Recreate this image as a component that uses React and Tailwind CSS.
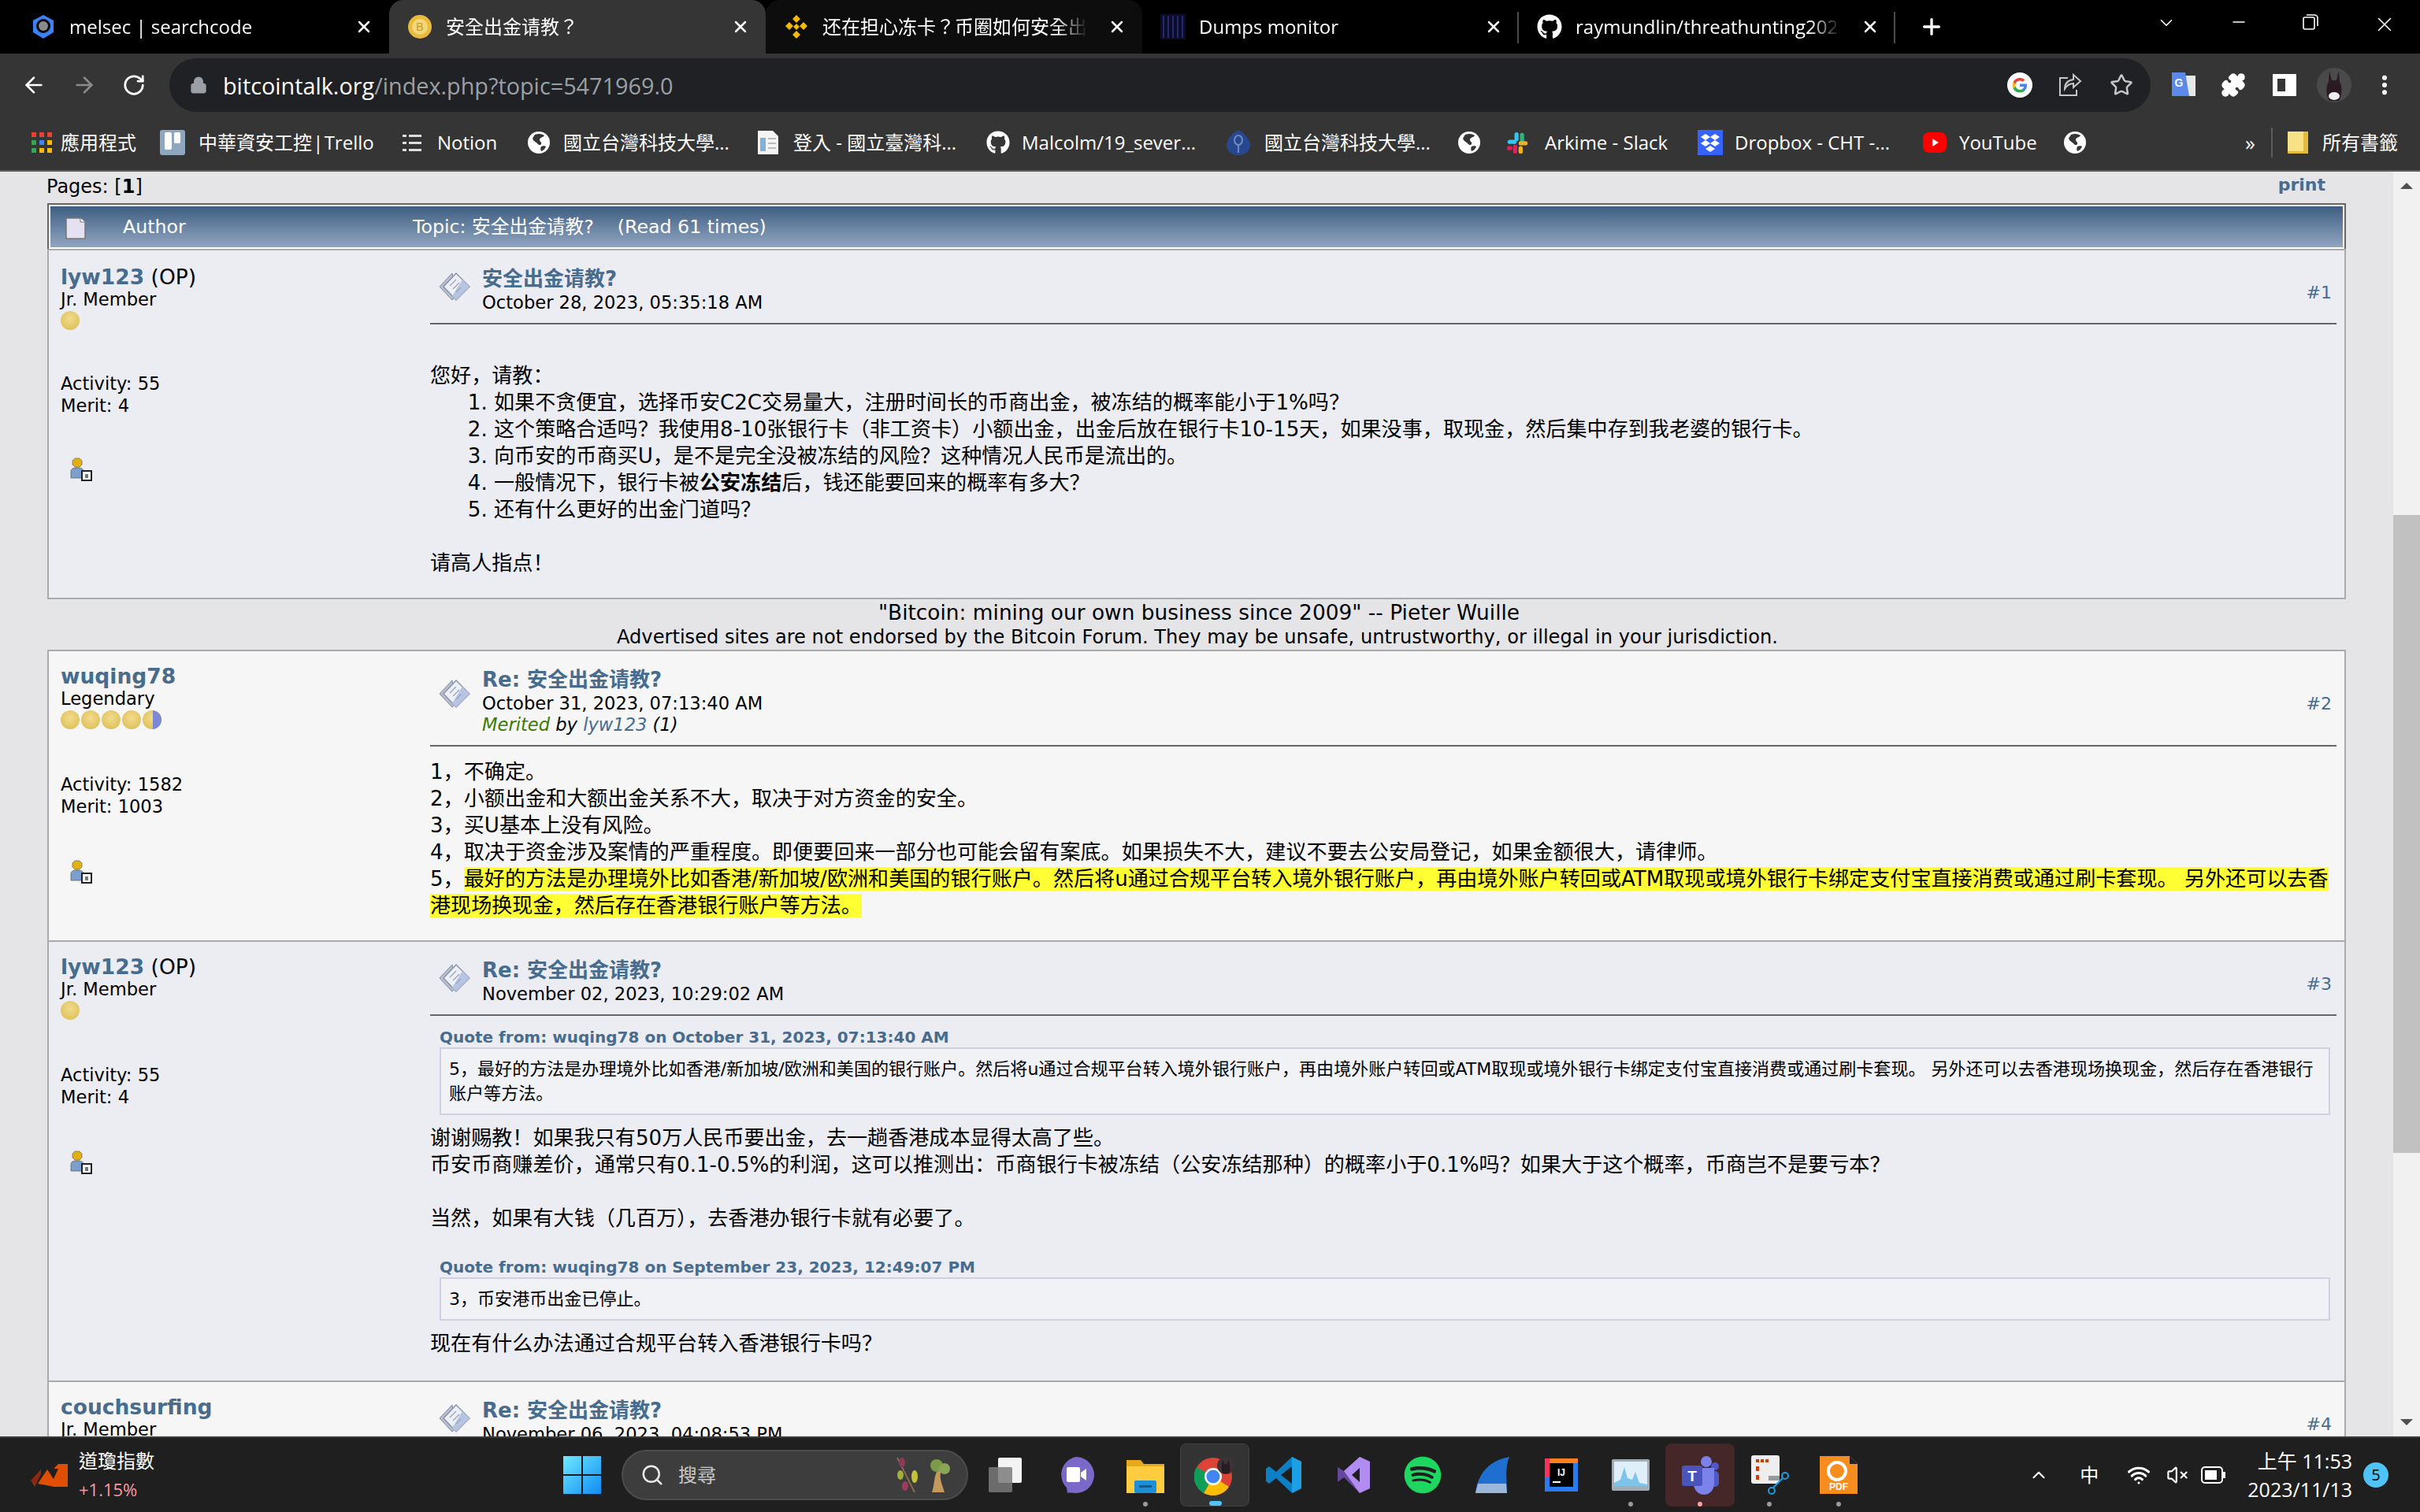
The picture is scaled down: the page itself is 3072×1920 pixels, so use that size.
import {
  ArrowLeft,
  ArrowRight,
  RotateCw,
  Lock,
  Star,
  Puzzle,
  EllipsisVertical,
  ChevronDown,
  ChevronUp,
  Minus,
  X,
  Plus,
  Wifi,
  VolumeX,
  Search,
} from "lucide-react";
import { FaGithub, FaSpotify } from "react-icons/fa";

const uiFont = "[font-family:'Open_Sans','Noto_Sans_CJK_TC',sans-serif]";
const forumFont = "[font-family:'DejaVu_Sans','Noto_Sans_CJK_SC',sans-serif]";

const GlobeIcon = () => (
  <svg viewBox="0 0 28 28" className="w-7 h-7">
    <circle cx="14" cy="14" r="14" fill="#fff" />
    <path d="M9 4c5-2 9-1 12 1-2 3-5 2-6 5-1 2 3 3 2 6-1 2-4 1-5-1-2-2-5-3-6-6 1-2 2-4 3-5zM17 19c2-1 5-1 6 0-1 3-3 5-6 6-1-2-1-4 0-6z" fill="#353535" />
  </svg>
);

const AppsIcon = () => (
  <svg viewBox="0 0 27 27" className="w-[27px] h-[27px]">
    {["#ea4335", "#ea4335", "#ea4335", "#34a853", "#4285f4", "#fbbc04", "#34a853", "#fbbc04", "#fbbc04"].map((c, i) => (
      <rect key={i} x={(i % 3) * 10} y={Math.floor(i / 3) * 10} width="6" height="6" fill={c} />
    ))}
  </svg>
);

const TrelloIcon = () => (
  <svg viewBox="0 0 32 32" className="w-8 h-8">
    <rect width="32" height="32" rx="3" fill="#8fa6bf" />
    <rect x="6" y="3" width="9" height="22" rx="2" fill="#fff" />
    <rect x="18" y="3" width="8" height="14" rx="2" fill="#fff" />
  </svg>
);

const NotionIcon = () => (
  <svg viewBox="0 0 26 26" className="w-[26px] h-[26px]">
    {[3, 12, 21].map((y) => (
      <g key={y}>
        <rect x="1" y={y} width="5" height="3" fill="#ddd" />
        <rect x="9" y={y} width="16" height="3" fill="#ddd" />
      </g>
    ))}
  </svg>
);

const DocIcon = () => (
  <svg viewBox="0 0 30 32" className="w-[30px] h-8">
    <path d="M2 1h19l7 7v23H2z" fill="#f4f4f4" />
    <rect x="5" y="10" width="7" height="17" fill="#7fb2dc" />
    <rect x="15" y="10" width="10" height="2" fill="#bbb" />
    <rect x="15" y="16" width="10" height="2" fill="#bbb" />
    <rect x="15" y="22" width="10" height="2" fill="#bbb" />
  </svg>
);

const NtustIcon = () => (
  <svg viewBox="0 0 32 32" className="w-8 h-8">
    <path d="M16 0c9 5 15 12 15 20 0 7-7 12-15 12S1 27 1 20C1 12 7 5 16 0z" fill="#27478f" />
    <ellipse cx="16" cy="13" rx="5" ry="6" fill="none" stroke="#7288bd" strokeWidth="2" />
    <path d="M16 19v10" stroke="#7288bd" strokeWidth="2" />
  </svg>
);

const SlackIcon = () => (
  <svg viewBox="0 0 32 32" className="w-7 h-8">
    <rect x="12" y="1" width="6" height="13" rx="3" fill="#36c5f0" />
    <rect x="2" y="12" width="13" height="6" rx="3" fill="#36c5f0" />
    <rect x="20" y="2" width="6" height="13" rx="3" fill="#2eb67d" />
    <rect x="18" y="14" width="13" height="6" rx="3" fill="#ecb22e" />
    <rect x="18" y="21" width="6" height="11" rx="3" fill="#ecb22e" />
    <rect x="10" y="19" width="6" height="13" rx="3" fill="#e01e5a" />
    <rect x="1" y="21" width="8" height="6" rx="3" fill="#e01e5a" />
  </svg>
);

const DropboxIcon = () => (
  <svg viewBox="0 0 32 32" className="w-8 h-8">
    <rect width="32" height="32" fill="#3563ff" />
    <path d="M10 5l6 4-6 4-6-4zM22 5l6 4-6 4-6-4zM10 13l6 4-6 4-6-4zM22 13l6 4-6 4-6-4zM16 20l6 4-6 4-6-4z" fill="#fff" />
  </svg>
);

const YoutubeIcon = () => (
  <svg viewBox="0 0 32 32" className="w-8 h-8">
    <rect x="1" y="3" width="30" height="26" rx="8" fill="#f00" />
    <path d="M13 11l8 5-8 5z" fill="#fff" />
  </svg>
);

const FolderBookmark = () => (
  <svg viewBox="0 0 28 30" className="w-7 h-[30px]">
    <rect x="1" y="1" width="24" height="28" fill="#f8e287" />
    <rect x="21" y="1" width="6" height="28" fill="#e3bd3a" />
    <rect x="1" y="26" width="24" height="3" fill="#e3bd3a" />
  </svg>
);

const bookmarks = [
  { icon: <AppsIcon />, label: "應用程式", cls: "w-[163px] gap-[10px]" },
  { icon: <TrelloIcon />, label: "中華資安工控 | Trello", cls: "w-[307px] gap-[17px] [word-spacing:-5px]" },
  { icon: <NotionIcon />, label: "Notion", cls: "w-[160px] gap-[19px]" },
  { icon: <GlobeIcon />, label: "國立台灣科技大學...", cls: "w-[290px] gap-[17px]" },
  { icon: <DocIcon />, label: "登入 - 國立臺灣科...", cls: "w-[292px] gap-[17px]" },
  { icon: <FaGithub className="w-[30px] h-[30px] text-white" />, label: "Malcolm/19_sever...", cls: "w-[304px] gap-[15px]" },
  { icon: <NtustIcon />, label: "國立台灣科技大學...", cls: "w-[295px] gap-[17px]" },
  { icon: <GlobeIcon />, label: "", cls: "w-[61px]" },
  { icon: <SlackIcon />, label: "Arkime - Slack", cls: "w-[243px] gap-[21px]" },
  { icon: <DropboxIcon />, label: "Dropbox - CHT -...", cls: "w-[285px] gap-[15px]" },
  { icon: <YoutubeIcon />, label: "YouTube", cls: "w-[180px] gap-[15px]" },
  { icon: <GlobeIcon />, label: "", cls: "w-[60px]" },
];

const SearchcodeIcon = () => (
  <svg viewBox="0 0 32 32" className="w-8 h-8">
    <path d="M16 1l13 7v15l-13 8-13-8V8z" fill="#3b82f6" />
    <circle cx="16" cy="15" r="9" fill="#0a0a0a" />
    <circle cx="16" cy="15" r="6" fill="#8a8a8a" />
  </svg>
);

const CoinIcon = () => (
  <svg viewBox="0 0 32 32" className="w-8 h-8">
    <circle cx="16" cy="16" r="15" fill="#e9bb3c" />
    <circle cx="16" cy="16" r="10" fill="#f2d677" />
    <text x="16" y="21" textAnchor="middle" fontSize="14" fill="#c79a24" fontFamily="Liberation Sans">B</text>
  </svg>
);

const BinanceIcon = () => (
  <svg viewBox="0 0 32 32" className="w-8 h-8">
    <path d="M16 1l5 5-5 5-5-5zM7 10l5 5-5 5-5-5zM25 10l5 5-5 5-5-5zM16 12l4 4-4 4-4-4zM16 21l5 5-5 5-5-5z" fill="#f0b90b" />
  </svg>
);

const DumpsIcon = () => (
  <svg viewBox="0 0 32 32" className="w-8 h-8">
    <rect width="32" height="32" fill="#0b0b2a" />
    {[3, 9, 15, 21, 27].map((x) => (
      <rect key={x} x={x} y="2" width="2" height="28" fill="#262a6a" />
    ))}
  </svg>
);

const tabs = [
  { icon: <SearchcodeIcon />, title: "melsec | searchcode" },
  { icon: <CoinIcon />, title: "安全出金请教？", active: true },
  { icon: <BinanceIcon />, title: "还在担心冻卡？币圈如何安全出金", dim: true },
  { icon: <DumpsIcon />, title: "Dumps monitor", sep: true },
  { icon: <FaGithub className="w-8 h-8 text-white" />, title: "raymundlin/threathunting2023", sep: true },
];

const GoogleG = () => (
  <svg viewBox="0 0 32 32" className="w-8 h-8">
    <circle cx="16" cy="16" r="16" fill="#fff" />
    <path d="M25 16.3c0-.7 0-1.3-.2-1.9H16v3.6h5.100a4.400 4.400 0 0 1-1.900 2.900v2.400h3c1.800-1.700 2.800-4 2.800-7z" fill="#4285f4" />
    <path d="M16 25.500c2.500 0 4.700-.8 6.200-2.200l-3-2.400c-.8.600-1.900 1-3.200 1-2.500 0-4.600-1.700-5.300-3.900H7.600v2.400a9.400 9.400 0 0 0 8.400 5.100z" fill="#34a853" />
    <path d="M10.700 18a5.600 5.600 0 0 1 0-3.600V12H7.600a9.400 9.400 0 0 0 0 8.400z" fill="#fbbc04" />
    <path d="M16 10.500c1.400 0 2.600.5 3.600 1.400l2.700-2.700A9.400 9.400 0 0 0 7.600 12l3.100 2.400c.7-2.200 2.800-3.900 5.300-3.900z" fill="#ea4335" />
  </svg>
);

const ShareIcon = () => (
  <svg viewBox="0 0 32 32" className="w-8 h-8" fill="none" stroke="#c4c7c5" strokeWidth="2">
    <path d="M13 7H3v22h21v-7" />
    <path d="M20 3l9 8-9 8v-5c-5 0-8 2-11 7 0-7 4-11 11-12z" />
  </svg>
);

const TranslateIcon = () => (
  <svg viewBox="0 0 34 34" className="w-[34px] h-[34px]">
    <path d="M15 5h17v26H15z" fill="#e8e8e8" />
    <path d="M2 1h17l5 30H2z" fill="#5a8bea" />
    <text x="11" y="19" textAnchor="middle" fontSize="14" fontWeight="700" fill="#fff" fontFamily="Liberation Sans">G</text>
  </svg>
);

const AvatarIcon = () => (
  <svg viewBox="0 0 44 44" className="w-11 h-11">
    <circle cx="22" cy="22" r="22" fill="#4a4a4a" />
    <path d="M16 4l3 12h6l3-12 1 14c4 5 3 18-1 24H16c-4-6-5-19-1-24z" fill="#2a1a22" />
    <ellipse cx="22" cy="36" rx="7" ry="5" fill="#eee" />
  </svg>
);

const TabBar = () => (
  <div className={`h-[68px] bg-black flex items-stretch pl-4 text-white text-[24px] ${uiFont}`}>
    {tabs.map((t) => (
      <div
        key={t.title}
        className={`w-[478px] shrink-0 flex items-center pl-[23px] pr-[20px] gap-[17px] relative rounded-t-[18px] ${
          t.active ? "bg-[#353535]" : t.dim ? "bg-[#0d0d0d]" : ""
        }`}
      >
        <span className="w-8 h-8 shrink-0 flex items-center justify-center">{t.icon}</span>
        <span className="flex-1 min-w-0 whitespace-nowrap overflow-hidden [mask-image:linear-gradient(to_right,black_88%,transparent)]">
          {t.title}
        </span>
        <X size={24} strokeWidth={2.5} className="shrink-0 ml-2" />
        {t.sep && <span className="absolute right-0 top-[15px] h-[40px] w-[2px] bg-[#4a4a4a]" />}
      </div>
    ))}
    <div className="w-[92px] flex items-center justify-center">
      <Plus size={32} strokeWidth={2.5} />
    </div>
    <div className="flex-1 flex items-start justify-end pt-[16px] pr-[30px] gap-[67px]">
      <ChevronDown size={26} strokeWidth={1.5} />
      <Minus size={24} strokeWidth={1.5} />
      <svg viewBox="0 0 24 24" className="w-6 h-6" fill="none" stroke="#fff" strokeWidth="1.6">
        <rect x="3" y="6" width="14" height="15" rx="2" />
        <path d="M7 3h10a4 4 0 0 1 4 4v10" />
      </svg>
      <X size={30} strokeWidth={1.3} />
    </div>
  </div>
);

const Toolbar = () => (
  <div className="h-[80px] bg-[#353535] flex items-center pl-[27px] text-white">
    <ArrowLeft size={32} strokeWidth={2} />
    <ArrowRight size={32} strokeWidth={2} className="ml-[32px] text-[#8b8b8b]" />
    <RotateCw size={30} strokeWidth={2.2} className="ml-[32px]" />
    <div className={`ml-[30px] w-[2515px] h-[68px] rounded-[34px] bg-[#202124] flex items-center pl-[26px] pr-[22px] text-[28.8px] ${uiFont}`}>
      <Lock size={22} strokeWidth={3} className="text-[#9aa0a6] fill-[#9aa0a6]" />
      <span className="ml-[20px] flex-1 mt-[2px]">
        bitcointalk.org<span className="text-[#9aa0a6]">/index.php?topic=5471969.0</span>
      </span>
      <GoogleG />
      <span className="ml-[32px]">
        <ShareIcon />
      </span>
      <Star size={30} strokeWidth={2} className="ml-[34px] text-[#c4c7c5]" />
    </div>
    <span className="ml-[25px]">
      <TranslateIcon />
    </span>
    <Puzzle size={32} strokeWidth={2} className="ml-[30px] fill-white" />
    <span className="ml-[34px] w-[30px] h-[28px] border-white border-[6px] border-r-[14px]" />
    <span className="ml-[26px]">
      <AvatarIcon />
    </span>
    <EllipsisVertical size={32} strokeWidth={2.5} className="ml-[26px]" />
  </div>
);

const BookmarkBar = () => (
  <div className={`h-[70px] pb-[2px] bg-[#353535] border-b-2 border-[#5f5f5f] flex items-center pl-[40px] text-[24px] text-white whitespace-nowrap ${uiFont}`}>
    {bookmarks.map((b, i) => (
      <div key={i} className={`${b.cls} shrink-0 flex items-center`}>
        {b.icon}
        {b.label && <span>{b.label}</span>}
      </div>
    ))}
    <span className="ml-[170px] text-[26px] leading-none">»</span>
    <span className="ml-[20px] w-[2px] h-[38px] bg-[#5c5c5c]" />
    <span className="ml-[18px] flex items-center gap-[17px]">
      <FolderBookmark />
      所有書籤
    </span>
  </div>
);

const PostIcon = () => (
  <svg viewBox="0 0 40 40" className="w-[40px] h-[40px] shrink-0">
    <path d="M17 3l-16 17 16 17 5-5z" fill="#b8bfcf" stroke="#7f8799" strokeWidth="1" />
    <path d="M22 3L6 20l16 17 17-17z" fill="#eef0f7" stroke="#8c93a8" strokeWidth="1.5" />
    <path d="M30 11l9 9-17 17-5-5z" fill="#b7c3e2" />
    <path d="M14 19l8-8M18 23l8-8M22 27l6-6" stroke="#9fa6b8" strokeWidth="1.4" />
  </svg>
);

const UserIcon = () => (
  <svg viewBox="0 0 28 30" className="w-7 h-[30px]">
    <path d="M6 1h6l3 3v5l-3 3H6L3 9V4z" fill="#e3b012" stroke="#666" strokeWidth="0.7" />
    <path d="M1 26v-8c0-4 3-5 8-5s8 1 8 5v8z" fill="#7d9fcb" stroke="#555" strokeWidth="0.7" />
    <rect x="15" y="17" width="12" height="12" fill="#fff" stroke="#222" strokeWidth="2" />
    <rect x="19" y="21" width="4" height="5" fill="#777" />
  </svg>
);

const Coin = ({ half }) => (
  <span className="w-[24px] h-[24px] rounded-full bg-[radial-gradient(circle_at_50%_40%,#f2dc8c,#d9b94f)] overflow-hidden flex justify-end">
    {half && <span className="w-[11px] h-full bg-[#7c87d6]" />}
  </span>
);

const Author = ({ name, op, rank, stars, half, activity, merit, first }) => (
  <div className={`w-[484px] shrink-0 pl-[15px] ${first ? "pt-[18px]" : "pt-[16px]"} text-[22.6px] leading-[27px] text-black`}>
    <div className="text-[26.5px] leading-[31px]">
      <span className="font-bold text-[#476c8e]">{name}</span>
      {op && <span> (OP)</span>}
    </div>
    {rank && <div>{rank}</div>}
    <div className="flex gap-[2px] h-[26px] items-center">
      {Array.from({ length: stars }).map((_, i) => (
        <Coin key={i} />
      ))}
      {half && <Coin half />}
    </div>
    <div className={first ? "mt-[54px]" : "mt-[56px]"}>Activity: {activity}</div>
    <div className="mt-[1px]">Merit: {merit}</div>
    <div className={`${first ? "mt-[52px]" : "mt-[54px]"} pl-[12px]`}>
      <UserIcon />
    </div>
  </div>
);

const PostHead = ({ subject, date, num, merited }) => (
  <div className="border-b-2 border-[#666] flex items-start">
    <div className={`pl-[11px] ${merited ? "pt-[14px]" : "pt-[6px]"}`}>
      <PostIcon />
    </div>
    <div className="ml-[15px] flex-1">
      <div className="text-[26px] leading-[33px] font-bold text-[#476c8e]">{subject}</div>
      <div className="text-[22.6px] leading-[27px] text-black">{date}</div>
      {merited && (
        <div className="text-[22.6px] leading-[27px] italic text-black">
          <span className="text-[#3d7a00]">Merited</span> by <span className="text-[#476c8e]">lyw123</span> (1)
        </div>
      )}
      <div className="h-[12px]" />
    </div>
    <div className={`text-[22px] text-[#476c8e] ${merited ? "mt-[30px]" : "mt-[17px]"} pr-[6px]`}>#{num}</div>
  </div>
);

const Quote = ({ head, children }) => (
  <div className="pl-[12px] pr-[4px]">
    <div className="text-[20px] leading-[26px] font-bold text-[#476c8e]">{head}</div>
    <div className="border-2 border-[#d0d0e0] bg-[#f1f2f6] px-[10px] py-[10px] text-[22.05px] leading-[31px] text-black">{children}</div>
  </div>
);

const Post = ({ bg, author, children }) => (
  <div className={`flex border-x-2 border-b-2 border-[#aaa] ${bg}`}>
    <Author {...author} />
    <div className="flex-1 min-w-0 pr-[10px] pt-[20px] text-[26.1px] leading-[34px] text-black">{children}</div>
  </div>
);

const yellow = "bg-[#ffff33]";

const Forum = () => (
  <div className={`flex-1 min-w-0 bg-[#e5e5e8] pl-[60px] pr-[60px] overflow-hidden ${forumFont}`}>
    <div className="flex justify-between h-[40px] items-center text-[24px] text-black">
      <span className="-ml-[1px] -mt-[2px]">
        Pages: [<b>1</b>]
      </span>
      <a className="text-[22px] font-bold text-[#476c8e] -mt-[7px] mr-[26px]">print</a>
    </div>

    <div className="border-2 border-[#666] border-b-0 p-[2px] bg-white">
      <div className="h-[52px] pt-[2px] bg-gradient-to-b from-[#3f5f82] to-[#92a6c1] flex items-center text-white text-[23.7px]">
        <svg viewBox="0 0 26 30" className="w-[26px] h-[30px] ml-[19px]">
          <path d="M1 3h18l6 5v21H1z" fill="#e4e2f2" stroke="#777" strokeWidth="1.500" />
          <path d="M19 3v5h6" fill="#fff" stroke="#777" strokeWidth="1" />
        </svg>
        <span className="ml-[47px] w-[368px]">Author</span>
        <span>Topic: 安全出金请教?</span>
        <span className="ml-[30px]">(Read 61 times)</span>
      </div>
    </div>

    <Post
      bg="bg-[#ecedf3] border-t-2"
      author={{ name: "lyw123", op: true, rank: "Jr. Member", stars: 1, activity: 55, merit: 4, first: true }}
    >
      <PostHead subject="安全出金请教?" date="October 28, 2023, 05:35:18 AM" num={1} />
      <div className="pt-[48px] pb-[27px] pr-[4px]">
        <div>您好，请教：</div>
        <ol className="pl-[81px] list-decimal">
          <li>如果不贪便宜，选择币安C2C交易量大，注册时间长的币商出金，被冻结的概率能小于1%吗？</li>
          <li>这个策略合适吗？我使用8-10张银行卡（非工资卡）小额出金，出金后放在银行卡10-15天，如果没事，取现金，然后集中存到我老婆的银行卡。</li>
          <li>向币安的币商买U，是不是完全没被冻结的风险？这种情况人民币是流出的。</li>
          <li>
            一般情况下，银行卡被<b>公安冻结</b>后，钱还能要回来的概率有多大？
          </li>
          <li>还有什么更好的出金门道吗？</li>
        </ol>
        <br />
        <div>请高人指点！</div>
      </div>
    </Post>

    <div className="text-center text-black">
      <div className="text-[26.4px] leading-[33px] pl-[6px]">"Bitcoin: mining our own business since 2009" -- Pieter Wuille</div>
      <div className="text-[24.15px] leading-[31px] pl-[2px]">Advertised sites are not endorsed by the Bitcoin Forum. They may be unsafe, untrustworthy, or illegal in your jurisdiction.</div>
    </div>

    <Post
      bg="bg-[#f6f6f6] border-t-2"
      author={{ name: "wuqing78", rank: "Legendary", stars: 4, half: true, activity: 1582, merit: 1003 }}
    >
      <PostHead subject="Re: 安全出金请教?" date="October 31, 2023, 07:13:40 AM" num={2} merited />
      <div className="pt-[15px] pb-[27px] pr-[4px]">
        <div>1，不确定。</div>
        <div>2，小额出金和大额出金关系不大，取决于对方资金的安全。</div>
        <div>3，买U基本上没有风险。</div>
        <div>4，取决于资金涉及案情的严重程度。即便要回来一部分也可能会留有案底。如果损失不大，建议不要去公安局登记，如果金额很大，请律师。</div>
        <div>
          5，<span className={yellow}>最好的方法是办理境外比如香港/新加坡/欧洲和美国的银行账户。然后将u通过合规平台转入境外银行账户，再由境外账户转回或ATM取现或境外银行卡绑定支付宝直接消费或通过刷卡套现。 另外还可以去香港现场换现金，然后存在香港银行账户等方法。</span>
        </div>
      </div>
    </Post>

    <Post bg="bg-[#ecedf3]" author={{ name: "lyw123", op: true, rank: "Jr. Member", stars: 1, activity: 55, merit: 4 }}>
      <PostHead subject="Re: 安全出金请教?" date="November 02, 2023, 10:29:02 AM" num={3} />
      <div className="pt-[14px] pb-[30px] pr-[4px]">
        <Quote head="Quote from: wuqing78 on October 31, 2023, 07:13:40 AM">
          5，最好的方法是办理境外比如香港/新加坡/欧洲和美国的银行账户。然后将u通过合规平台转入境外银行账户，再由境外账户转回或ATM取现或境外银行卡绑定支付宝直接消费或通过刷卡套现。 另外还可以去香港现场换现金，然后存在香港银行账户等方法。
        </Quote>
        <div className="mt-[12px]">谢谢赐教！如果我只有50万人民币要出金，去一趟香港成本显得太高了些。</div>
        <div>币安币商赚差价，通常只有0.1-0.5%的利润，这可以推测出：币商银行卡被冻结（公安冻结那种）的概率小于0.1%吗？如果大于这个概率，币商岂不是要亏本？</div>
        <br />
        <div>当然，如果有大钱（几百万），去香港办银行卡就有必要了。</div>
        <div className="h-[32px]" />
        <Quote head="Quote from: wuqing78 on September 23, 2023, 12:49:07 PM">3，币安港币出金已停止。</Quote>
        <div className="mt-[12px]">现在有什么办法通过合规平台转入香港银行卡吗？</div>
      </div>
    </Post>

    <Post bg="bg-[#f6f6f6]" author={{ name: "couchsurfing", rank: "Jr. Member", stars: 1, activity: 55, merit: 4 }}>
      <PostHead subject="Re: 安全出金请教?" date="November 06, 2023, 04:08:53 PM" num={4} />
    </Post>
  </div>
);

const Scrollbar = () => (
  <div className="w-[34px] shrink-0 bg-[#f1f1f1] flex flex-col items-center">
    <svg viewBox="0 0 16 8" className="w-4 h-2 mt-[14px] shrink-0">
      <path d="M8 0l8 8H0z" fill="#505050" />
    </svg>
    <div className="w-full h-[810px] bg-[#c1c1c1] mt-[414px] shrink-0" />
    <div className="flex-1" />
    <svg viewBox="0 0 16 8" className="w-4 h-2 mb-[14px] shrink-0">
      <path d="M8 8l8-8H0z" fill="#505050" />
    </svg>
  </div>
);

const Dock = ({ children, dot, active, teams }) => (
  <div
    className={`w-[88px] h-[80px] rounded-[8px] flex items-center justify-center relative shrink-0 ${
      active ? "bg-[#333] border border-[#444]" : teams ? "bg-[#452729]" : ""
    }`}
  >
    {children}
    {dot && <span className={`absolute bottom-[0px] rounded-full h-[6px] ${dot}`} />}
  </div>
);

const greyDot = "left-[41px] w-[6px] bg-[#9a9a9a]";

const Taskbar = () => (
  <div className={`h-[96px] bg-[#1f1f1f] border-t-2 border-[#3a3a3a] flex items-center text-white shrink-0 ${uiFont}`}>
    <div className="w-[715px] shrink-0 flex items-center pl-[38px]">
      <svg viewBox="0 0 48 30" className="w-[48px] h-[30px]">
        <path d="M14 8L1 22l5 8 8-16z" fill="#8b2a12" />
        <path d="M10 26l12-18 8 12 6-13h-6l6-6h12v30H36z" fill="#e04e00" />
      </svg>
      <div className="ml-[14px] leading-[36px]">
        <div className="text-[24px]">道瓊指數</div>
        <div className="text-[22px] text-[#f49aa5]">+1.15%</div>
      </div>
    </div>
    <svg viewBox="0 0 48 48" className="w-[48px] h-[48px] shrink-0">
      <defs>
        <linearGradient id="win" x1="0" y1="0" x2="1" y2="1">
          <stop offset="0" stopColor="#6fe9ff" />
          <stop offset="1" stopColor="#0f8cf5" />
        </linearGradient>
      </defs>
      <path d="M0 0h23v23H0zM25 0h23v23H25zM0 25h23v23H0zM25 25h23v23H25z" fill="url(#win)" />
    </svg>
    <div className="ml-[26px] w-[440px] h-[64px] rounded-[32px] bg-[#3d3d3d] border-2 border-[#4c4c4c] flex items-center pl-[22px] pr-[16px] text-[24px] text-[#c8c8c8] shrink-0">
      <Search size={30} strokeWidth={2} className="text-[#e8e8e8]" />
      <span className="ml-[18px] flex-1">搜尋</span>
      <svg viewBox="0 0 80 48" className="w-[80px] h-[48px]">
        <path d="M52 46c4-12 2-20 8-30l4 2c-4 10 2 20 4 28z" fill="#c39a5c" />
        <circle cx="58" cy="12" r="8" fill="#7c9a47" />
        <circle cx="68" cy="16" r="7" fill="#8aa655" />
        <path d="M8 2l22 44" stroke="#8a6a4a" strokeWidth="2" />
        <ellipse cx="14" cy="8" rx="4" ry="6" fill="#8d3a52" />
        <ellipse cx="12" cy="24" rx="4" ry="6" fill="#a2ad3a" />
        <ellipse cx="30" cy="26" rx="4" ry="8" fill="#c4c23a" />
        <ellipse cx="18" cy="38" rx="4" ry="6" fill="#a03a5a" />
      </svg>
    </div>

    <div className="ml-[5px] flex items-center">
      <Dock>
        <svg viewBox="0 0 50 44" className="w-[50px] h-[44px]">
          <rect x="14" y="0" width="30" height="32" rx="2" fill="#f3f3f3" />
          <rect x="2" y="12" width="30" height="32" rx="2" fill="#7a7a7a" opacity="0.85" />
        </svg>
      </Dock>
      <Dock>
        <svg viewBox="0 0 46 46" className="w-[46px] h-[46px]">
          <path d="M23 0a23 23 0 0 1 0 46c-4 0-8-1-11 0l-1-7a23 23 0 0 1 12-39z" fill="#7b68c8" />
          <rect x="11" y="13" width="17" height="19" rx="2" fill="#fff" />
          <path d="M29 20l7-5v15l-7-5z" fill="#fff" />
        </svg>
      </Dock>
      <Dock dot={greyDot}>
        <svg viewBox="0 0 48 46" className="w-[48px] h-[46px]">
          <path d="M0 4h18l4 5h26v37H0z" fill="#e8a91d" />
          <path d="M0 12h48v34H0z" fill="#ffcb3f" />
          <rect x="10" y="30" width="28" height="16" rx="2" fill="#1b8fd8" />
          <rect x="16" y="36" width="16" height="3" fill="#0f5a8f" />
        </svg>
      </Dock>
      <Dock active dot="left-[36px] w-[16px] bg-[#4fc3f7]">
        <svg viewBox="0 0 52 52" className="w-[52px] h-[52px]">
          <circle cx="24" cy="28" r="24" fill="#db4437" />
          <path d="M24 28L44 41A24 24 0 0 1 12 49z" fill="#fbbc04" />
          <path d="M24 28L12 49A24 24 0 0 1 3 16z" fill="#0f9d58" />
          <circle cx="24" cy="28" r="11" fill="#fff" />
          <circle cx="24" cy="28" r="8.500" fill="#4285f4" />
          <circle cx="40" cy="14" r="11" fill="#3b3336" />
          <path d="M36 6l2 6h4l2-6 1 8c1 4 0 7-1 10h-8c-1-3-2-6-1-10z" fill="#2a1a22" />
        </svg>
      </Dock>
      <Dock>
        <svg viewBox="0 0 48 48" className="w-[48px] h-[48px]">
          <path d="M34 1l12 6v34l-12 6-20-19-9 7-4-3v-16l4-3 9 7z" fill="#0d7fc4" />
          <path d="M34 13v22L20 24z" fill="#1f1f1f" />
          <path d="M34 1l12 6v34l-12 6z" fill="#1ba0e5" />
        </svg>
      </Dock>
      <Dock>
        <svg viewBox="0 0 48 48" className="w-[48px] h-[48px]">
          <path d="M32 1l13 6v34l-13 6-20-20-8 6V14l8 5z" fill="#67469e" />
          <path d="M32 1l13 6v34l-13 6L12 19z" fill="#b18df2" />
          <path d="M32 15v18l-10-9z" fill="#1f1f1f" />
        </svg>
      </Dock>
      <Dock>
        <FaSpotify className="w-[48px] h-[48px] text-[#1ed760]" />
      </Dock>
      <Dock>
        <svg viewBox="0 0 48 48" className="w-[48px] h-[48px]">
          <path d="M3 47C5 28 16 6 46 1c-6 14-3 30-3 46z" fill="#1f6fd1" />
          <path d="M3 47l3-12h36l1 12z" fill="#9bb8dc" />
        </svg>
      </Dock>
      <Dock>
        <svg viewBox="0 0 42 42" className="w-[42px] h-[42px]">
          <rect width="42" height="42" fill="#2a7af0" />
          <path d="M0 0h42v6H0z" fill="#fc801d" />
          <path d="M0 0h6v24H0z" fill="#fe315d" />
          <rect x="6" y="6" width="30" height="30" fill="#000" />
          <text x="21" y="22" textAnchor="middle" fontSize="12" fontWeight="700" fill="#fff" fontFamily="Liberation Sans">IJ</text>
          <rect x="10" y="29" width="10" height="2" fill="#fff" />
        </svg>
      </Dock>
      <Dock dot={greyDot}>
        <svg viewBox="0 0 48 40" className="w-[48px] h-[40px]">
          <rect width="48" height="40" rx="2" fill="#a4acb4" />
          <rect x="3" y="3" width="42" height="31" fill="#dfeef8" />
          <path d="M3 30l8-4 5-16 4 14 6 2 4-10 5 14 10 2v2H3z" fill="#7cc4ea" />
        </svg>
      </Dock>
      <Dock teams dot="left-[41px] w-[6px] bg-[#f7a3a8]">
        <svg viewBox="0 0 48 50" className="w-[48px] h-[50px]">
          <circle cx="32" cy="8" r="7" fill="#7b83eb" />
          <circle cx="43" cy="14" r="5" fill="#5059c9" />
          <rect x="36" y="20" width="12" height="20" rx="5" fill="#5059c9" />
          <path d="M16 16h26v20c0 8-6 14-13 14s-13-6-13-14z" fill="#7b83eb" />
          <rect x="1" y="13" width="26" height="26" rx="3" fill="#4b53bc" />
          <text x="14" y="33" textAnchor="middle" fontSize="19" fontWeight="700" fill="#fff" fontFamily="Liberation Sans">T</text>
        </svg>
      </Dock>
      <Dock dot={greyDot}>
        <svg viewBox="0 0 50 50" className="w-[50px] h-[50px]">
          <rect x="2" y="0" width="36" height="36" rx="3" fill="#eee" />
          <path d="M8 5h4v4H8zM14 5h4v4h-4zM20 5h4v4h-4zM8 14h4v6H8zM8 25h4v6H8z" fill="#d83b01" />
          <path d="M24 26h14v6H24z" fill="#999" />
          <circle cx="45" cy="26" r="4" fill="none" stroke="#1b9ce0" strokeWidth="2" />
          <circle cx="28" cy="45" r="4" fill="none" stroke="#1b9ce0" strokeWidth="2" />
          <path d="M42 29L30 41" stroke="#1b9ce0" strokeWidth="2" />
        </svg>
      </Dock>
      <Dock dot={greyDot}>
        <svg viewBox="0 0 48 48" className="w-[48px] h-[48px]">
          <path d="M0 0h38l10 10v38H0z" fill="#f78d1e" />
          <path d="M38 0l10 10H38z" fill="#222" />
          <circle cx="22" cy="19" r="11" fill="none" stroke="#fff" strokeWidth="4" />
          <text x="24" y="43" textAnchor="middle" fontSize="12" fontWeight="700" fill="#fff" fontFamily="Liberation Sans">PDF</text>
        </svg>
      </Dock>
    </div>

    <div className="flex-1 flex items-center justify-end pr-[40px]">
      <ChevronUp size={26} strokeWidth={2} />
      <span className="ml-[31px] text-[24px] w-[40px] text-center">中</span>
      <Wifi size={30} strokeWidth={2.5} className="ml-[28px]" />
      <VolumeX size={28} strokeWidth={1.8} className="ml-[20px]" />
      <svg viewBox="0 0 32 26" className="w-[32px] h-[26px] ml-[16px]">
        <rect x="1" y="3" width="26" height="20" rx="4" fill="none" stroke="#fff" strokeWidth="2" />
        <rect x="5" y="7" width="15" height="12" fill="#fff" />
        <rect x="28" y="9" width="3" height="8" fill="#fff" />
      </svg>
      <div className="ml-[27px] text-right text-[25px] leading-[36px] whitespace-nowrap">
        <div>上午 11:53</div>
        <div>2023/11/13</div>
      </div>
      <span className="ml-[14px] w-[32px] h-[32px] rounded-full bg-[#4fc3f7] text-black text-[20px] flex items-center justify-center">5</span>
    </div>
  </div>
);

export default function App() {
  return (
    <div className="w-[3072px] h-[1920px] flex flex-col overflow-hidden bg-[#e5e5e8]">
      <TabBar />
      <Toolbar />
      <BookmarkBar />
      <div className="flex-1 min-h-0 flex">
        <Forum />
        <Scrollbar />
      </div>
      <Taskbar />
    </div>
  );
}
